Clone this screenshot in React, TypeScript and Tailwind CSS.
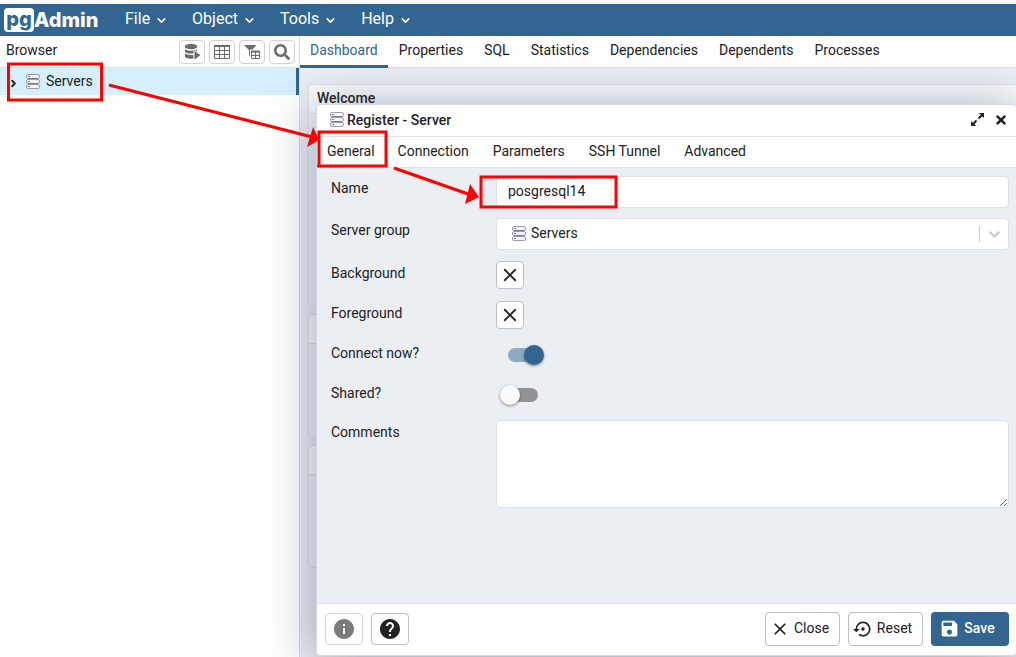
import { useState } from "react";
import { ChevronDown, ChevronRight } from "lucide-react";
import { FaSearch, FaTimes } from "react-icons/fa";
import {
  MdClose,
  MdHelp,
  MdInfo,
  MdSave,
  MdSettingsBackupRestore,
} from "react-icons/md";

const menus = ["File", "Object", "Tools", "Help"];

const mainTabs = [
  "Dashboard",
  "Properties",
  "SQL",
  "Statistics",
  "Dependencies",
  "Dependents",
  "Processes",
];

const dialogTabs = [
  "General",
  "Connection",
  "Parameters",
  "SSH Tunnel",
  "Advanced",
];

function ServerIcon() {
  return (
    <svg width="14" height="16" viewBox="0 0 14 16" fill="none" aria-hidden="true">
      <g stroke="#9c9cae" strokeWidth="1">
        <rect x="0.5" y="0.5" width="13" height="4" rx="1.5" fill="#f5f5f9" />
        <rect x="0.5" y="5.5" width="13" height="4" rx="1.5" fill="#f5f5f9" />
        <rect x="0.5" y="10.5" width="13" height="4" rx="1.5" fill="#f5f5f9" />
        <path d="M2 2.5h2M2 7.5h2M2 12.5h2M2 4.5h10M2 9.5h10" stroke="#77778f" />
      </g>
    </svg>
  );
}

function QueryIcon() {
  return (
    <svg width="17" height="17" viewBox="0 0 17 17" fill="#6b6b6b" aria-hidden="true">
      <path d="M1 3.2C1 1.9 3.9 1 7 1s6 .9 6 2.200v.8c0 1.300-2.900 2.200-6 2.200S1 5.300 1 4z" />
      <path d="M1 6.200c1.500 1.100 4 1.500 6 1.500s4.500-.4 6-1.500v2l-3.500-1.700v4C5 10.800 1 10 1 8.400z" />
      <path d="M1 10.600c1.500 1.100 4 1.500 8.500 1.400V15.500c-.8.200-1.700.2-2.500.2-3.100 0-6-.9-6-2.200z" />
      <path d="m10.500 8 6 4.200-6 4.300z" />
    </svg>
  );
}

function TableIcon() {
  return (
    <svg width="16" height="15" viewBox="0 0 16 15" fill="none" aria-hidden="true">
      <path d="M0 1h16v2H0z" fill="#6b6b6b" />
      <path
        d="M.5 2.500v12h15v-12M.5 6.500h15M.5 10.500h15M5.500 3v11.500M10.500 3v11.500"
        stroke="#6b6b6b"
      />
    </svg>
  );
}

function FilterTableIcon() {
  return (
    <svg width="16" height="14" viewBox="0 0 16 14" fill="none" aria-hidden="true">
      <path d="M0 0h12.500L8 5v8.500L5 10.500V5z" fill="#6b6b6b" />
      <path d="M6 4.500h10V14H6z" fill="#fff" />
      <path d="M7 5.500h9v2H7z" fill="#6b6b6b" />
      <path d="M7.500 6v7.500h8V6M7.500 10.500h8M11.500 7v6.500" stroke="#6b6b6b" />
    </svg>
  );
}

function ExpandIcon() {
  return (
    <svg width="13" height="13" viewBox="0 0 13 13" fill="#222222" aria-hidden="true">
      <path d="M8 0h5v5zM0 8v5h5z" />
      <path d="M11 2 7.500 5.500M5.500 7.500 2 11" stroke="#222222" strokeWidth="2" />
    </svg>
  );
}

function Logo() {
  return (
    <div className="flex w-[99px] items-center font-['Inter'] text-xl font-extrabold leading-6 text-white">
      <span className="flex h-6 w-[30px] items-center justify-center rounded bg-white pb-0.5 text-[#326690]">
        pg
      </span>
      <span>Admin</span>
    </div>
  );
}

const toolButtons = [
  { label: "Query Tool", icon: <QueryIcon /> },
  { label: "View Data", icon: <TableIcon /> },
  { label: "Filtered Rows", icon: <FilterTableIcon /> },
  { label: "Search Objects", icon: <FaSearch size={16} color="#6b6b6b" /> },
];

function BrowserPane() {
  return (
    <aside className="flex w-[300px] shrink-0 flex-col border-r border-[#d5d9e2] bg-white">
      <div className="flex h-8 items-center justify-between border-b border-[#dde0e6] pl-1.5 pr-1">
        <span className="pb-1">Browser</span>
        <div className="flex gap-1">
          {toolButtons.map((b) => (
            <button
              key={b.label}
              aria-label={b.label}
              className="flex h-6 w-[26px] items-center justify-center rounded border border-[#cfd3de] bg-white"
            >
              {b.icon}
            </button>
          ))}
        </div>
      </div>
      <div className="flex h-[27px] items-center border-r-3 border-[#326690] bg-[#d6effc] pl-2">
        <ChevronRight size={11} strokeWidth={4} className="mt-1" />
        <span className="ml-[7px]">
          <ServerIcon />
        </span>
        <span className="ml-1.5 pb-0.5">Servers</span>
      </div>
    </aside>
  );
}

function Card({ title, className }: { title?: string; className: string }) {
  return (
    <div className={`rounded-l border border-r-0 border-[#dde0e6] bg-[#f1f3f7] ${className}`}>
      <div className="h-[29px] rounded-tl border-b border-[#dde0e6] bg-[#fafbfc] px-2 pt-[3px] font-medium">
        {title}
      </div>
    </div>
  );
}

function Dashboard() {
  return (
    <main className="flex min-w-0 grow flex-col">
      <nav className="flex h-8 shrink-0 gap-px border-b border-[#dde0e6] bg-white">
        {mainTabs.map((t, i) => (
          <button
            key={t}
            className={
              i === 0
                ? "-mb-px border-b-3 border-[#326690] px-2.5 pb-0.5 text-[#326690]"
                : "px-2.5 pb-1"
            }
          >
            {t}
          </button>
        ))}
      </nav>
      <div className="flex grow flex-col gap-2 bg-[#ebeef3] pl-2 pt-4">
        <Card title="Welcome" className="h-[222px]" />
        <Card className="h-[123px]" />
        <Card className="h-[123px]" />
      </div>
    </main>
  );
}

function Switch({
  id,
  checked,
  onChange,
  className,
}: {
  id: string;
  checked: boolean;
  onChange: (v: boolean) => void;
  className: string;
}) {
  return (
    <label className={`relative flex h-[30px] w-[34px] items-center ${className}`}>
      <input
        id={id}
        type="checkbox"
        checked={checked}
        onChange={(e) => onChange(e.target.checked)}
        className="peer absolute inset-0 appearance-none"
      />
      <span className="h-3.5 w-full rounded-full bg-[#919295] peer-checked:bg-[#8eabc2]" />
      <span className="absolute -left-1 size-5 rounded-full bg-[#fafafa] shadow-[0_1px_3px_rgba(0,0,0,0.45)] peer-checked:left-4 peer-checked:bg-[#326690]" />
    </label>
  );
}

function Field({
  id,
  label,
  tall,
  children,
}: {
  id: string;
  label: string;
  tall?: boolean;
  children: React.ReactNode;
}) {
  return (
    <div className={tall ? "flex min-h-8 items-start" : "flex min-h-[30px] items-center"}>
      <label
        htmlFor={id}
        className={`w-[165px] shrink-0 self-start ${tall ? "leading-6" : "leading-[26px]"}`}
      >
        {label}
      </label>
      {children}
    </div>
  );
}

function ColorButton({ id }: { id: string }) {
  return (
    <button
      id={id}
      className="flex size-7 items-center justify-center rounded border border-[#b9bfce] bg-white"
    >
      <MdClose size={22} />
    </button>
  );
}

function GeneralForm() {
  const [name, setName] = useState("posgresql14");
  const [connect, setConnect] = useState(true);
  const [shared, setShared] = useState(false);

  return (
    <form className="flex grow flex-col gap-2.5 bg-[#ebeef3] py-2 pl-3.5 pr-[7px]">
      <Field id="name" label="Name" tall>
        <input
          id="name"
          value={name}
          onChange={(e) => setName(e.target.value)}
          className="h-8 min-w-0 grow rounded border border-[#dde0e6] bg-white px-[11px] pb-0.5"
        />
      </Field>
      <Field id="group" label="Server group" tall>
        <div className="relative min-w-0 grow">
          <select
            id="group"
            className="h-8 w-full appearance-none rounded border border-[#dde0e6] bg-white pb-0.5 pl-[34px]"
          >
            <option>Servers</option>
          </select>
          <span className="pointer-events-none absolute inset-y-0 left-4 flex items-center">
            <ServerIcon />
          </span>
          <span className="pointer-events-none absolute inset-y-2 right-1.5 flex items-center border-l border-[#cccccc] pl-1.5">
            <ChevronDown size={17} strokeWidth={3} color="#cccccc" />
          </span>
        </div>
      </Field>
      <Field id="bg" label="Background">
        <ColorButton id="bg" />
      </Field>
      <Field id="fg" label="Foreground">
        <ColorButton id="fg" />
      </Field>
      <Field id="connect" label="Connect now?">
        <Switch id="connect" checked={connect} onChange={setConnect} className="ml-3" />
      </Field>
      <Field id="shared" label="Shared?">
        <Switch id="shared" checked={shared} onChange={setShared} className="ml-2" />
      </Field>
      <Field id="comments" label="Comments" tall>
        <textarea
          id="comments"
          className="h-[88px] min-w-0 grow rounded border border-[#dde0e6] bg-white p-2"
        />
      </Field>
    </form>
  );
}

function RegisterDialog() {
  return (
    <section
      role="dialog"
      aria-label="Register - Server"
      className="absolute bottom-px left-[316px] right-0 top-[104px] flex flex-col rounded border border-r-0 border-[#d5d9e2] bg-white shadow-[0_5px_50px_rgba(60,75,110,0.5)]"
    >
      <header className="flex h-8 shrink-0 items-center border-b border-[#dde0e6] pb-0.5 pl-[13px] pr-2">
        <ServerIcon />
        <h1 className="ml-[3px] grow font-medium">Register - Server</h1>
        <button aria-label="Maximize" className="mr-2.5">
          <ExpandIcon />
        </button>
        <button aria-label="Close dialog">
          <FaTimes size={14} />
        </button>
      </header>
      <nav className="flex h-[31px] shrink-0 border-b border-[#dde0e6]">
        {dialogTabs.map((t, i) => (
          <button
            key={t}
            className={i === 0 ? "border-b-2 border-[#326690] pl-2.5 pr-[11px]" : "px-3 pb-0.5"}
          >
            {t}
          </button>
        ))}
      </nav>
      <GeneralForm />
      <footer className="flex h-[52px] shrink-0 items-center gap-2 border-t border-[#dde0e6] pb-0.5 pl-2 pr-[7px]">
        <button
          aria-label="SQL help"
          className="flex h-8 w-[38px] items-center justify-center rounded border border-[#d5d9e2] text-[#7a7a7a]"
        >
          <MdInfo size={24} />
        </button>
        <button
          aria-label="Help"
          className="flex h-8 w-[38px] items-center justify-center rounded border border-[#b9bfce]"
        >
          <MdHelp size={24} />
        </button>
        <div className="grow" />
        <button className="flex h-[34px] w-[75px] items-center justify-center gap-1 rounded border border-[#b9bfce] pr-1.5">
          <MdClose size={20} />
          <span className="pb-0.5">Close</span>
        </button>
        <button className="flex h-[34px] w-[75px] items-center justify-center gap-1 rounded border border-[#b9bfce] pr-1.5">
          <MdSettingsBackupRestore size={20} />
          <span className="pb-0.5">Reset</span>
        </button>
        <button className="flex h-[34px] w-[78px] items-center justify-center gap-1 rounded bg-[#326690] pr-1.5 font-medium text-white">
          <MdSave size={21} />
          <span className="pb-0.5">Save</span>
        </button>
      </footer>
    </section>
  );
}

// red boxes and arrows that lead through the steps
function StepMarks() {
  return (
    <svg
      className="pointer-events-none absolute left-0 top-0"
      width="640"
      height="220"
      fill="none"
      stroke="#fe0000"
      strokeWidth="3"
      aria-hidden="true"
    >
      <rect x="8.500" y="64" width="93" height="36" />
      <rect x="319" y="132" width="67" height="34" />
      <rect x="481" y="177" width="135" height="30" />
      <path d="M109 85 312 137M394 168l77 27" />
      <g fill="#fe0000" stroke="none">
        <path d="m313 127 6 13-12 7z" />
        <path d="m470 184 9 13-14 7z" />
      </g>
    </svg>
  );
}

export default function App() {
  return (
    <div className="relative flex h-screen flex-col overflow-hidden bg-white font-['Roboto',sans-serif] text-sm text-[#222222]">
      <header className="mt-1 flex h-8 shrink-0 items-center bg-[#326690] px-1 text-white">
        <Logo />
        <nav className="flex pl-2.5">
          {menus.map((m) => (
            <button key={m} className="flex items-center gap-[5px] px-3 pb-0.5 text-base">
              {m}
              <ChevronDown size={13} strokeWidth={3} className="mt-0.5" />
            </button>
          ))}
        </nav>
      </header>
      <div className="flex min-h-0 grow">
        <BrowserPane />
        <Dashboard />
      </div>
      <RegisterDialog />
      <StepMarks />
    </div>
  );
}
